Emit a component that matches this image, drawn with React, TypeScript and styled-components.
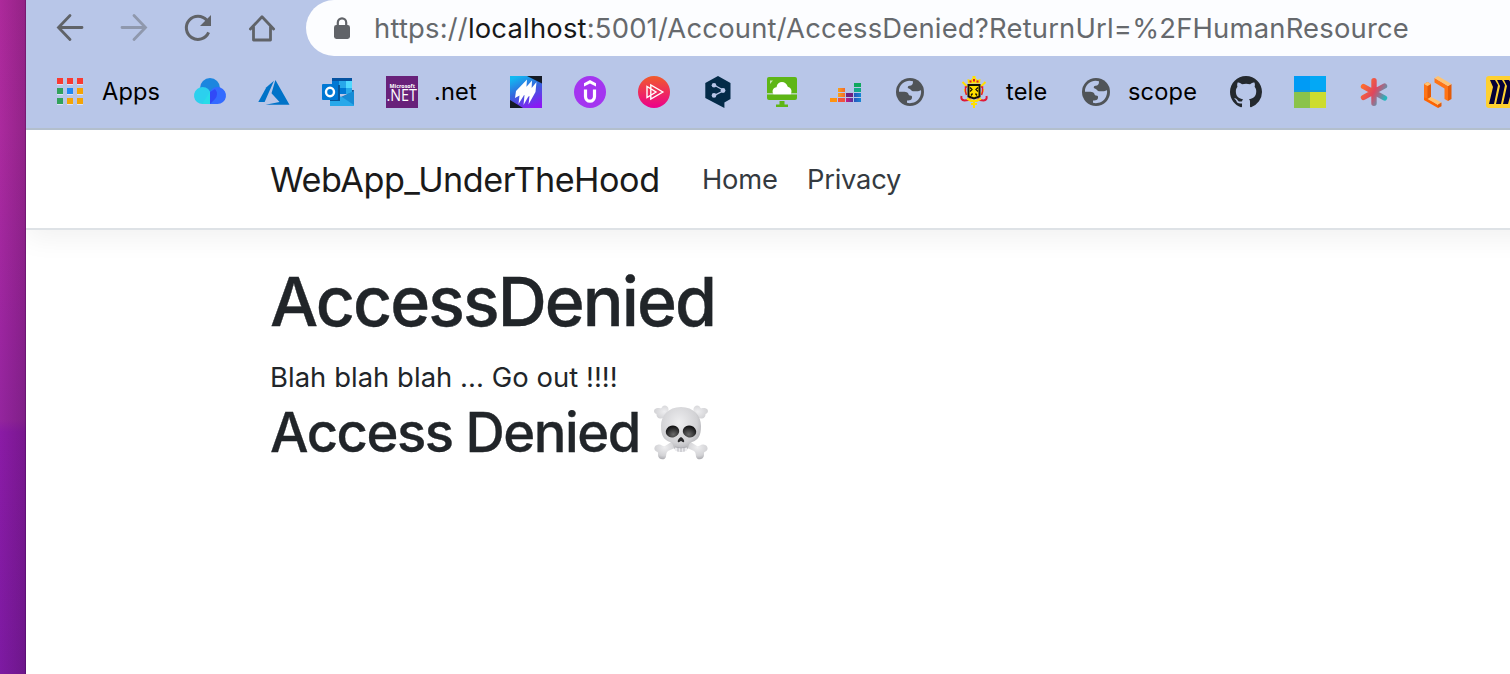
import React from "react";
import styled, { createGlobalStyle } from "styled-components";

const GlobalStyle = createGlobalStyle`
  *, *::before, *::after { box-sizing: border-box; }
  html, body { margin: 0; padding: 0; overflow: hidden; }
  body { font-family: Inter, "Liberation Sans", sans-serif; background: #fff; }
`;

const Desktop = styled.div`
  display: flex;
  width: 1510px;
  height: 674px;
  overflow: hidden;
`;

const Wallpaper = styled.aside`
  flex: 0 0 26px;
  background:
    linear-gradient(90deg, rgba(50, 10, 50, 0) 0%, rgba(50, 10, 50, 0.2) 94%, rgba(40, 0, 50, 0.5) 100%),
    linear-gradient(180deg, #ad299b 0px, #ab2a9e 130px, #9c25a0 330px, #94259e 420px, #8b1ba6 432px, #7d1aa2 674px);
`;

const Window = styled.div`
  flex: 1;
  min-width: 0;
  display: flex;
  flex-direction: column;
  background: #fff;
  overflow: hidden;
`;

const Chrome = styled.header`
  flex: 0 0 130px;
  background: #b8c6e8;
  border-bottom: 2px solid #b3bfcd;
`;

const Toolbar = styled.div`
  display: flex;
  align-items: center;
  height: 56px;
  padding-left: 28px;
`;

const ToolButton = styled.button<{ $dim?: boolean }>`
  display: flex;
  width: 32px;
  height: 32px;
  margin-right: 32px;
  padding: 0;
  border: 0;
  background: none;
  color: #606368;
  opacity: ${(p) => (p.$dim ? 0.46 : 1)};
`;

const AddressBar = styled.div`
  display: flex;
  align-items: center;
  flex: 1;
  height: 56px;
  margin-left: -4px;
  padding-left: 20px;
  border-radius: 28px 0 0 28px;
  background: #fcfdff;
`;

const Url = styled.span`
  margin-left: 16px;
  font-size: 27.4px;
  line-height: 34px;
  letter-spacing: 0.198px;
  color: #66696d;
  white-space: nowrap;
`;

const Host = styled.span`
  color: #17181a;
`;

const Bookmarks = styled.nav`
  display: flex;
  align-items: center;
  gap: 32px;
  height: 72px;
  padding-left: 28px;
  overflow: hidden;
`;

const Bookmark = styled.a`
  display: flex;
  flex: none;
  align-items: center;
  gap: 16px;
  height: 32px;
`;

const BookmarkLabel = styled.span<{ $width: number }>`
  width: ${(p) => p.$width}px;
  font-size: 23.6px;
  line-height: 32px;
  letter-spacing: 0.15px;
  color: #000;
  white-space: nowrap;
`;

const SiteHeader = styled.nav`
  display: flex;
  align-items: center;
  height: 100px;
  flex: none;
  margin-right: -60px;
  padding: 2px 0 0 244px;
  border-bottom: 2px solid #dee2e6;
  box-shadow: 0 8px 26px rgba(0, 0, 0, 0.06);
  clip-path: inset(0 0 -40px 0);
`;

const Brand = styled.a`
  width: 432px;
  font-size: 34.2px;
  line-height: 52px;
  letter-spacing: -0.46px;
  color: #1a1a1a;
`;

const NavLink = styled.a<{ $width: number }>`
  width: ${(p) => p.$width}px;
  font-size: 27.3px;
  line-height: 42px;
  letter-spacing: -0.22px;
  color: #343a40;
`;

const Main = styled.main`
  padding: 29px 0 0 244px;
  color: #212529;
`;

const Title = styled.h1`
  margin: 0 0 12px;
  font-size: 68px;
  line-height: 85px;
  font-weight: 500;
  letter-spacing: -1.95px;
  -webkit-text-stroke: 0.4px currentColor;
`;

const Message = styled.p`
  margin: 0 0 1px;
  font-size: 27.4px;
  line-height: 42px;
  letter-spacing: 0.06px;
`;

const Subtitle = styled.h2`
  display: flex;
  align-items: center;
  margin: 0;
  font-size: 54.4px;
  line-height: 67px;
  font-weight: 500;
  letter-spacing: -1.48px;
  -webkit-text-stroke: 0.3px currentColor;
`;

const SubtitleText = styled.span`
  width: 383px;
  white-space: nowrap;
`;

const IconCanvas = styled.svg`
  flex: none;
  overflow: visible;
`;

const Icon = ({ size = 32, children }: { size?: number; children: React.ReactNode }) => (
  <IconCanvas width={size} height={size} viewBox={`0 0 ${size} ${size}`} fill="none" aria-hidden>
    {children}
  </IconCanvas>
);

const BackIcon = () => (
  <Icon>
    <path d="M28 16H5M16 4L4.5 16L16 28" transform="translate(0 -.5)" stroke="currentColor" strokeWidth="2.8" strokeLinecap="round" />
  </Icon>
);

const ForwardIcon = () => (
  <Icon>
    <path d="M4 16H27M16 4L27.5 16L16 28" transform="translate(0 -.5)" stroke="currentColor" strokeWidth="2.8" strokeLinecap="round" />
  </Icon>
);

const ReloadIcon = () => (
  <Icon>
    <path d="M26.6 20.4A11.6 11.6 0 1 1 24.8 8.3" stroke="currentColor" strokeWidth="3" />
    <path d="M29 3v11H18z" fill="currentColor" />
  </Icon>
);

const HomeIcon = () => (
  <Icon>
    <path d="M4.4 17L16 4.8L27.6 17M7.5 15V28H24.5V15" stroke="currentColor" strokeWidth="2.8" strokeLinecap="round" strokeLinejoin="round" />
  </Icon>
);

const LockIcon = () => (
  <Icon>
    <rect x="8" y="13" width="16" height="14" rx="2.4" fill="#606368" />
    <path d="M11.8 14V10.5a4.2 4.2 0 0 1 8.4 0V14" stroke="#606368" strokeWidth="2.2" />
  </Icon>
);

const AppsIcon = () => {
  const colors = ["#f93b32", "#f93b32", "#f93b32", "#32a25b", "#2089f3", "#f4a405", "#32a25b", "#f4a405", "#f4a405"];
  return (
    <Icon>
      {colors.map((fill, i) => {
        const x = 3 + (i % 3) * 10;
        const y = 2 + Math.floor(i / 3) * 10;
        return (
          <g key={i}>
            <rect x={x} y={y + 1} width="6" height="6" fill="#dde4f4" />
            <rect x={x} y={y} width="6" height="6" fill={fill} />
          </g>
        );
      })}
    </Icon>
  );
};

const CloudIcon = () => (
  <Icon>
    <circle cx="16" cy="12" r="10" fill="#1c86df" />
    <path d="M16 28H8.5A8.5 8.5 0 1 1 16 15.5z" fill="#2cd0ee" />
    <path d="M8 28L16 16v12z" fill="#28dce8" />
    <path d="M16 28h7.5A8.5 8.5 0 1 0 16 15.5z" fill="#336bff" />
    <path d="M16 28V16l5-3q4 5 0 10z" fill="#3149f7" />
  </Icon>
);

const AzureIcon = () => (
  <Icon>
    <path d="M16 4.8L8.4 11.3L.3 26H6.6z" fill="#0073c8" />
    <path d="M17.4 4L13.5 17.3L21.5 26L7.5 28.8H31.5z" fill="#0073c8" />
  </Icon>
);

const OutlookIcon = () => (
  <Icon>
    <path d="M10 2h20v16H10z" fill="#0078d4" />
    <path d="M10 2h20v3H10z" fill="#0553a1" />
    <path d="M17 5h7v7h-7z" fill="#28a8ea" />
    <path d="M24 5h6v7h-6z" fill="#50d9ff" />
    <path d="M10 12h7v6h-7z" fill="#0358a7" />
    <path d="M24 12h6v6h-6z" fill="#28a8ea" />
    <path d="M8 17l12 4 12-6v15H8z" fill="#28a8ea" />
    <path d="M20 21l12-6v14z" fill="#168bd5" />
    <path d="M20 21l12-6v-.8L30 14v2l-11 5z" fill="#0a4e8c" />
    <path d="M16 9h2v16H8v-2h8z" fill="#07569a" />
    <rect y="8" width="16" height="16" rx="1" fill="#0078d4" />
    <ellipse cx="8" cy="16" rx="4" ry="4.2" stroke="#fff" strokeWidth="2.4" />
  </Icon>
);

const DotNetIcon = () => (
  <Icon>
    <rect width="32" height="32" fill="#68217a" />
    <text x="3.5" y="12" fill="#fff" fontFamily="Open Sans, sans-serif" fontSize="5.9" fontWeight="700" textLength="25.5" lengthAdjust="spacingAndGlyphs">Microsoft</text>
    <text x="0.5" y="25.3" fill="#fff" fontFamily="Open Sans, sans-serif" fontSize="16" textLength="30.5" lengthAdjust="spacingAndGlyphs">.NET</text>
  </Icon>
);

const SlashesIcon = () => (
  <Icon>
    <defs>
      <linearGradient id="slashes" x1="8" y1="0" x2="23" y2="32" gradientUnits="userSpaceOnUse">
        <stop stopColor="#11b8f1" />
        <stop offset=".45" stopColor="#3565dc" />
        <stop offset="1" stopColor="#8b18f4" />
      </linearGradient>
    </defs>
    <rect width="32" height="32" fill="url(#slashes)" />
    <path d="M17 0h15v7.5zM0 24l13 8H0z" fill="#141a24" />
    <path d="M17 3.5L6 15L5 22L9.5 19.5L8.5 28L16 16zM22 4.5L14.5 13L10.5 21L14.5 19L13.5 29L21.5 15zM26.5 6L20 14L16 22L19.5 20L18.5 28.5L25.5 16z" fill="#fff" />
  </Icon>
);

const UdemyIcon = () => (
  <Icon>
    <circle cx="16" cy="16" r="16" fill="#a435f0" />
    <path d="M10 10.6v-3.4L16 3.9l6 3.3v3.4L16 7.4z" fill="#fff" />
    <path d="M11.5 13.500V20.500a4.500 4.700 0 0 0 9 0V13.500" stroke="#fff" strokeWidth="3.200" />
  </Icon>
);

const PlayIcon = () => (
  <Icon>
    <defs>
      <linearGradient id="play" x1="0" y1="0" x2="0" y2="1">
        <stop stopColor="#f15b2a" />
        <stop offset="1" stopColor="#ec008c" />
      </linearGradient>
    </defs>
    <circle cx="16" cy="16" r="16" fill="url(#play)" />
    <path d="M9 10.5v11l9-5.5zM12.8 9v14l12-7z" stroke="#fff" strokeWidth="1.4" />
  </Icon>
);

const DeeplIcon = () => (
  <Icon>
    <path d="M16 0L28.5 7V23L22.4 26.5V32L3.3 22V7z" fill="#042b48" />
    <path d="M12 9l10 5.5L12 19.6" stroke="#b8c6e8" strokeWidth="1.3" />
    <circle cx="12" cy="9.2" r="2.3" fill="#b8c6e8" />
    <circle cx="21" cy="14.5" r="2.4" fill="#b8c6e8" />
    <circle cx="12" cy="19.4" r="2.3" fill="#b8c6e8" />
  </Icon>
);

const MonitorIcon = () => (
  <Icon>
    <rect x="1" y="1" width="30" height="23" rx="2" fill="#5eb615" />
    <path d="M1 17.8h30" stroke="#bed8bd" strokeWidth="1.4" />
    <path d="M7.5 18.3C5.5 15 7 11.5 10.5 11.2C11.5 4.5 20 4.5 21.8 10.8C25 11.5 26.5 15 24.8 18.3z" fill="#fff" />
    <path d="M4 7V4.5h3L4 8z" fill="#c6e5b0" />
    <path d="M13.5 25h5v3.5H22V31H10v-2.5h3.5z" fill="#5eb615" />
  </Icon>
);

const BarsIcon = () => (
  <Icon>
    <defs>
      <linearGradient id="bars1"><stop stopColor="#f9a21b" /><stop offset="1" stopColor="#f56a2b" /></linearGradient>
      <linearGradient id="bars2"><stop stopColor="#cf1783" /><stop offset="1" stopColor="#55329c" /></linearGradient>
      <linearGradient id="bars3"><stop stopColor="#2852bd" /><stop offset="1" stopColor="#1688d4" /></linearGradient>
    </defs>
    <path d="M0 22h7v4H0z" fill="#ff930f" />
    <path d="M8 12h7v4H8zM8 17h7v4H8z" fill="url(#bars1)" />
    <path d="M8 22h7v4H8z" fill="#f05440" />
    <path d="M16 17h7v4h-7z" fill="#702080" />
    <path d="M16 22h7v4h-7z" fill="url(#bars2)" />
    <path d="M24 7h7v4h-7z" fill="#10a85d" />
    <path d="M24 12h7v4h-7z" fill="#16a887" />
    <path d="M24 17h7v4h-7zM24 22h7v4h-7z" fill="url(#bars3)" />
  </Icon>
);

const GlobeIcon = () => (
  <Icon>
    <circle cx="16" cy="16" r="14" fill="#505458" />
    <path d="M5 13.5C6 8.5 10.5 5 15.5 4.8L19 5.2C19.2 8.3 18 9.5 15.5 9.7C14.2 9.8 13.8 10.5 13.8 12L15.8 13C17.5 14 17.5 15.2 19 15.2H24C25.5 15.2 26 14 27 14.2C27.6 18 26 23 21.5 25.8C18 27.5 15 27.4 13 26.8V24.4C15 24.6 17.6 24.4 18 22C18.2 20.2 17.8 19.6 16 19.5C14.4 19.4 14.7 17.6 13.6 16.7C12 15.4 9 15.8 5 15.8z" fill="#b8c6e8" />
  </Icon>
);

const CrestIcon = () => (
  <Icon>
    <path d="M10 7.500L9.500 3l3 1 2-2V0h3v2l2 2 3-1-.5 4.500z" fill="#ffdf00" />
    <path d="M11.500 4.500h2v2h-2zM18.500 4.500h2v2h-2zM15 3h2v2.500h-2z" fill="#e01b35" />
    <path d="M4.500 6l5 5M27.500 6l-5 5M6.500 13l2 5M25.500 13l-2 5" stroke="#ffdf00" strokeWidth="2" />
    <path d="M9 11H7.500v5l1 3M23 11h1.500v5l-1 3" stroke="#e01b35" strokeWidth="1.500" />
    <path d="M10.500 9h11v11.500l-5.500 2-5.500-2z" fill="#ffdf00" stroke="#151005" strokeWidth="2" />
    <path d="M12 11.500l2 2-2 2M20 11.500l-2 2 2 2M13 19.500l1.500-2M19 19.500l-1.500-2" stroke="#151005" strokeWidth="1.300" />
    <path d="M3.500 20q-1 4 3 4.500q4 0 6-2M28.500 20q1 4-3 4.500q-4 0-6-2" stroke="#df1839" strokeWidth="2" />
    <path d="M9 22.500q7 5 14 0" stroke="#ffdf00" strokeWidth="2.200" />
    <path d="M15 24h2v3h2v2h-2v3h-2v-3h-2v-2h2z" fill="#ffdf00" />
  </Icon>
);

const GithubIcon = () => (
  <Icon>
    <path transform="scale(2)" d="M8 0C3.58 0 0 3.58 0 8c0 3.54 2.29 6.53 5.47 7.59.4.07.55-.17.55-.38 0-.19-.01-.82-.01-1.49-2.01.37-2.53-.49-2.69-.94-.09-.23-.48-.94-.82-1.13-.28-.15-.68-.52-.01-.53.63-.01 1.08.58 1.23.82.72 1.21 1.87.87 2.33.66.07-.52.28-.87.51-1.07-1.78-.2-3.64-.89-3.64-3.95 0-.87.31-1.59.82-2.15-.08-.2-.36-1.02.08-2.12 0 0 .67-.21 2.2.82.64-.18 1.32-.27 2-.27s1.36.09 2 .27c1.53-1.04 2.2-.82 2.2-.82.44 1.1.16 1.92.08 2.12.51.56.82 1.27.82 2.15 0 3.07-1.87 3.75-3.65 3.95.29.25.54.73.54 1.48 0 1.07-.01 1.93-.01 2.2 0 .21.15.46.55.38A8.01 8.01 0 0 0 16 8c0-4.42-3.58-8-8-8z" fill="#24292e" />
  </Icon>
);

const TilesIcon = () => (
  <Icon>
    <path d="M0 0h16v16H0z" fill="#009bf5" />
    <path d="M16 0h16v16H16z" fill="#03a8f5" />
    <path d="M0 14h32v2H0z" fill="#169bd8" />
    <path d="M0 16h16v16H0z" fill="#8bc34a" />
    <path d="M16 16h16v16H16z" fill="#cddc2e" />
  </Icon>
);

const AsteriskIcon = () => (
  <Icon>
    <defs>
      <linearGradient id="aster" x1="4" y1="10" x2="27" y2="23" gradientUnits="userSpaceOnUse">
        <stop stopColor="#ff6d2d" />
        <stop offset=".5" stopColor="#df465e" />
        <stop offset=".75" stopColor="#8b7895" />
        <stop offset="1" stopColor="#22b8be" />
      </linearGradient>
    </defs>
    <path d="M16 4.8v22.4M5.5 10.5l21 11.5M5.5 21.5l21-11.5" stroke="url(#aster)" strokeWidth="5.4" strokeLinecap="round" />
  </Icon>
);

const BracketsIcon = () => (
  <Icon>
    <path d="M2 8l3.5-2L9 8v13l-3 3.500L2 24z" fill="#ff7416" />
    <path d="M5.5 10L9 8v13l-3.500 2z" fill="#e35b08" />
    <path d="M2 8l3.5-2L9 8l-3.500 2z" fill="#ffc372" />
    <path d="M2 21.500l4 1 10 6.500v3L2 24z" fill="#ff6400" />
    <path d="M5.500 23L9 21l10.500 5.500L16 28.700z" fill="#ffc372" />
    <path d="M16 28.500l3.500-2v3.700L16 32z" fill="#e35b08" />
    <path d="M12.500 2L26 10v15l-3.500-2V12.500l-10-6z" fill="#ff7416" />
    <path d="M26 10l3.500-2v15L26 25z" fill="#e35b08" />
    <path d="M12.500 2L16 0l13.500 8L26 10z" fill="#ffc372" />
  </Icon>
);

const MiroIcon = () => (
  <Icon>
    <rect width="32" height="32" rx="3" fill="#ffd02f" />
    <path d="M4 4h5l3 5-4 19H3l4-17zM11 4h5l3 5-4 19h-5l4-18zM18 4h5l4 6-5 18h-5l4-18z" fill="#050038" />
  </Icon>
);

const BoneEnds = () => (
  <>
    <path d="M20 18L14 12.500C12 11 10.500 14 7 13.500C3.500 13 3.500 10 3.500 9C0 8 .5 4 3.500 3.300C6 2.800 7 3.500 8.500 3C10 -1 15 0 15.500 4C15.700 6.500 14.500 7.500 16 9.500L24 16z" fill="url(#bone)" />
    <path d="M20 36L12 41C10 42 8.500 39 5.500 39.500C1 40 0 45 3.500 46.500C5.500 47.300 5 48 5 50C5 55 12 56 13 51.500C13.500 49 13 48 15 46L24 42z" fill="url(#bone)" />
  </>
);

const SkullIcon = () => (
  <Icon size={56}>
    <defs>
      <radialGradient id="bone" cx=".45" cy=".35" r=".7">
        <stop stopColor="#eeeef0" />
        <stop offset=".65" stopColor="#d2d2d5" />
        <stop offset="1" stopColor="#a2a2a7" />
      </radialGradient>
      <radialGradient id="socket" cx=".5" cy=".75" r=".7">
        <stop stopColor="#6a6a6a" />
        <stop offset="1" stopColor="#101011" />
      </radialGradient>
    </defs>
    <BoneEnds />
    <g transform="translate(56 0) scale(-1 1)"><BoneEnds /></g>
    <path d="M28 2C15 2 8 11 8 21c0 10 3 14 9 16 3 1 3 3 4 6 2 5 12 5 14 0 1-3 1-5 4-6 6-2 9-6 9-16C48 11 41 2 28 2z" fill="url(#bone)" />
    <ellipse cx="19.500" cy="26.500" rx="6.800" ry="6" transform="rotate(-15 19.500 26.500)" fill="url(#socket)" />
    <ellipse cx="36.500" cy="26.500" rx="6.800" ry="6" transform="rotate(15 36.500 26.500)" fill="url(#socket)" />
    <path d="M28 32c-2 1-4 4-3 5 1 1 2-1 3-1s2 2 3 1c1-1-1-4-3-5z" fill="#29292b" />
    <path d="M22 42q6 2 12 0v3.5q-6 3-12 0z" fill="#ececef" />
    <path d="M22 42q6 2 12 0M25 42.5v4M28 43v4M31 42.5v4" stroke="#aaaab0" strokeWidth=".8" />
  </Icon>
);

type BookmarkItem = { icon: React.ReactNode; label?: string; width?: number };

const bookmarks: BookmarkItem[] = [
  { icon: <AppsIcon />, label: "Apps", width: 60 },
  { icon: <CloudIcon /> },
  { icon: <AzureIcon /> },
  { icon: <OutlookIcon /> },
  { icon: <DotNetIcon />, label: ".net", width: 44 },
  { icon: <SlashesIcon /> },
  { icon: <UdemyIcon /> },
  { icon: <PlayIcon /> },
  { icon: <DeeplIcon /> },
  { icon: <MonitorIcon /> },
  { icon: <BarsIcon /> },
  { icon: <GlobeIcon /> },
  { icon: <CrestIcon />, label: "tele", width: 42 },
  { icon: <GlobeIcon />, label: "scope", width: 70 },
  { icon: <GithubIcon /> },
  { icon: <TilesIcon /> },
  { icon: <AsteriskIcon /> },
  { icon: <BracketsIcon /> },
  { icon: <MiroIcon /> },
];

export default function App() {
  return (
    <>
      <GlobalStyle />
      <Desktop>
        <Wallpaper />
        <Window>
          <Chrome>
            <Toolbar>
              <ToolButton aria-label="Back"><BackIcon /></ToolButton>
              <ToolButton aria-label="Forward" $dim><ForwardIcon /></ToolButton>
              <ToolButton aria-label="Reload"><ReloadIcon /></ToolButton>
              <ToolButton aria-label="Home"><HomeIcon /></ToolButton>
              <AddressBar>
                <LockIcon />
                <Url>
                  https://<Host>localhost</Host>:5001/Account/AccessDenied?ReturnUrl=%2FHumanResource
                </Url>
              </AddressBar>
            </Toolbar>
            <Bookmarks>
              {bookmarks.map((item, i) => (
                <Bookmark key={i}>
                  {item.icon}
                  {item.label && <BookmarkLabel $width={item.width ?? 0}>{item.label}</BookmarkLabel>}
                </Bookmark>
              ))}
            </Bookmarks>
          </Chrome>
          <SiteHeader>
            <Brand>WebApp_UnderTheHood</Brand>
            <NavLink $width={105}>Home</NavLink>
            <NavLink $width={105}>Privacy</NavLink>
          </SiteHeader>
          <Main>
            <Title>AccessDenied</Title>
            <Message>Blah blah blah ... Go out !!!!</Message>
            <Subtitle>
              <SubtitleText>Access Denied</SubtitleText>
              <SkullIcon />
            </Subtitle>
          </Main>
        </Window>
      </Desktop>
    </>
  );
}
